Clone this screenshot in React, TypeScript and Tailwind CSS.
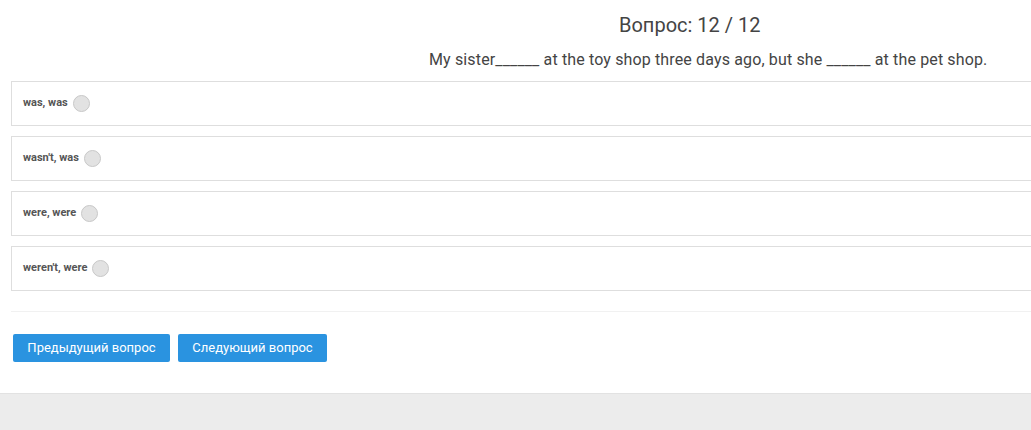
import React, { useState } from 'react';

const OPTIONS = ['was, was', "wasn't, was", 'were, were', "weren't, were"];

const App: React.FC = () => {
  const [picked, setPicked] = useState<number | null>(null);

  return (
    <div className="w-[1031px] h-[430px] overflow-hidden bg-[#ececec] font-['Roboto','Liberation_Sans',sans-serif]">
      <div className="bg-white h-[394px] border-b border-[#e2e2e2] overflow-hidden">
        {/* Header */}
        <div className="pt-[12px] pl-[619px] text-[20px] leading-[26px] text-[#444]">Вопрос: 12 / 12</div>
        <div className="pt-[11px] pl-[429px] text-[16px] leading-[22px] tracking-[0.14px] text-[#444] whitespace-nowrap">
          My sister______ at the toy shop three days ago, but she ______ at the pet shop.
        </div>

        {/* Options */}
        <div className="mt-[10px] ml-[11px] w-[1040px] flex flex-col gap-[10px]">
          {OPTIONS.map((o, i) => (
            <label
              key={o}
              className="h-[45px] border border-[#dedede] flex items-center pl-[11px] cursor-pointer"
              onClick={() => setPicked(i)}
            >
              <span className="text-[11px] font-bold text-[#555]">{o}</span>
              <span
                className={`ml-[5px] w-[17px] h-[17px] rounded-full border border-[#c8c8c8] ${
                  picked === i ? 'bg-[#2a93e0]' : 'bg-[#e2e2e2]'
                }`}
              />
            </label>
          ))}
        </div>

        <div className="mt-[20px] ml-[11px] border-t border-[#f1f1f1]" />

        {/* Navigation */}
        <div className="mt-[22px] ml-[13px] flex gap-[8px]">
          <button className="h-[28px] w-[157px] rounded-[2px] bg-[#2a93e0] text-white text-[13px]">
            Предыдущий вопрос
          </button>
          <button className="h-[28px] w-[149px] rounded-[2px] bg-[#2a93e0] text-white text-[13px]">
            Следующий вопрос
          </button>
        </div>
      </div>
    </div>
  );
};

export default App;
